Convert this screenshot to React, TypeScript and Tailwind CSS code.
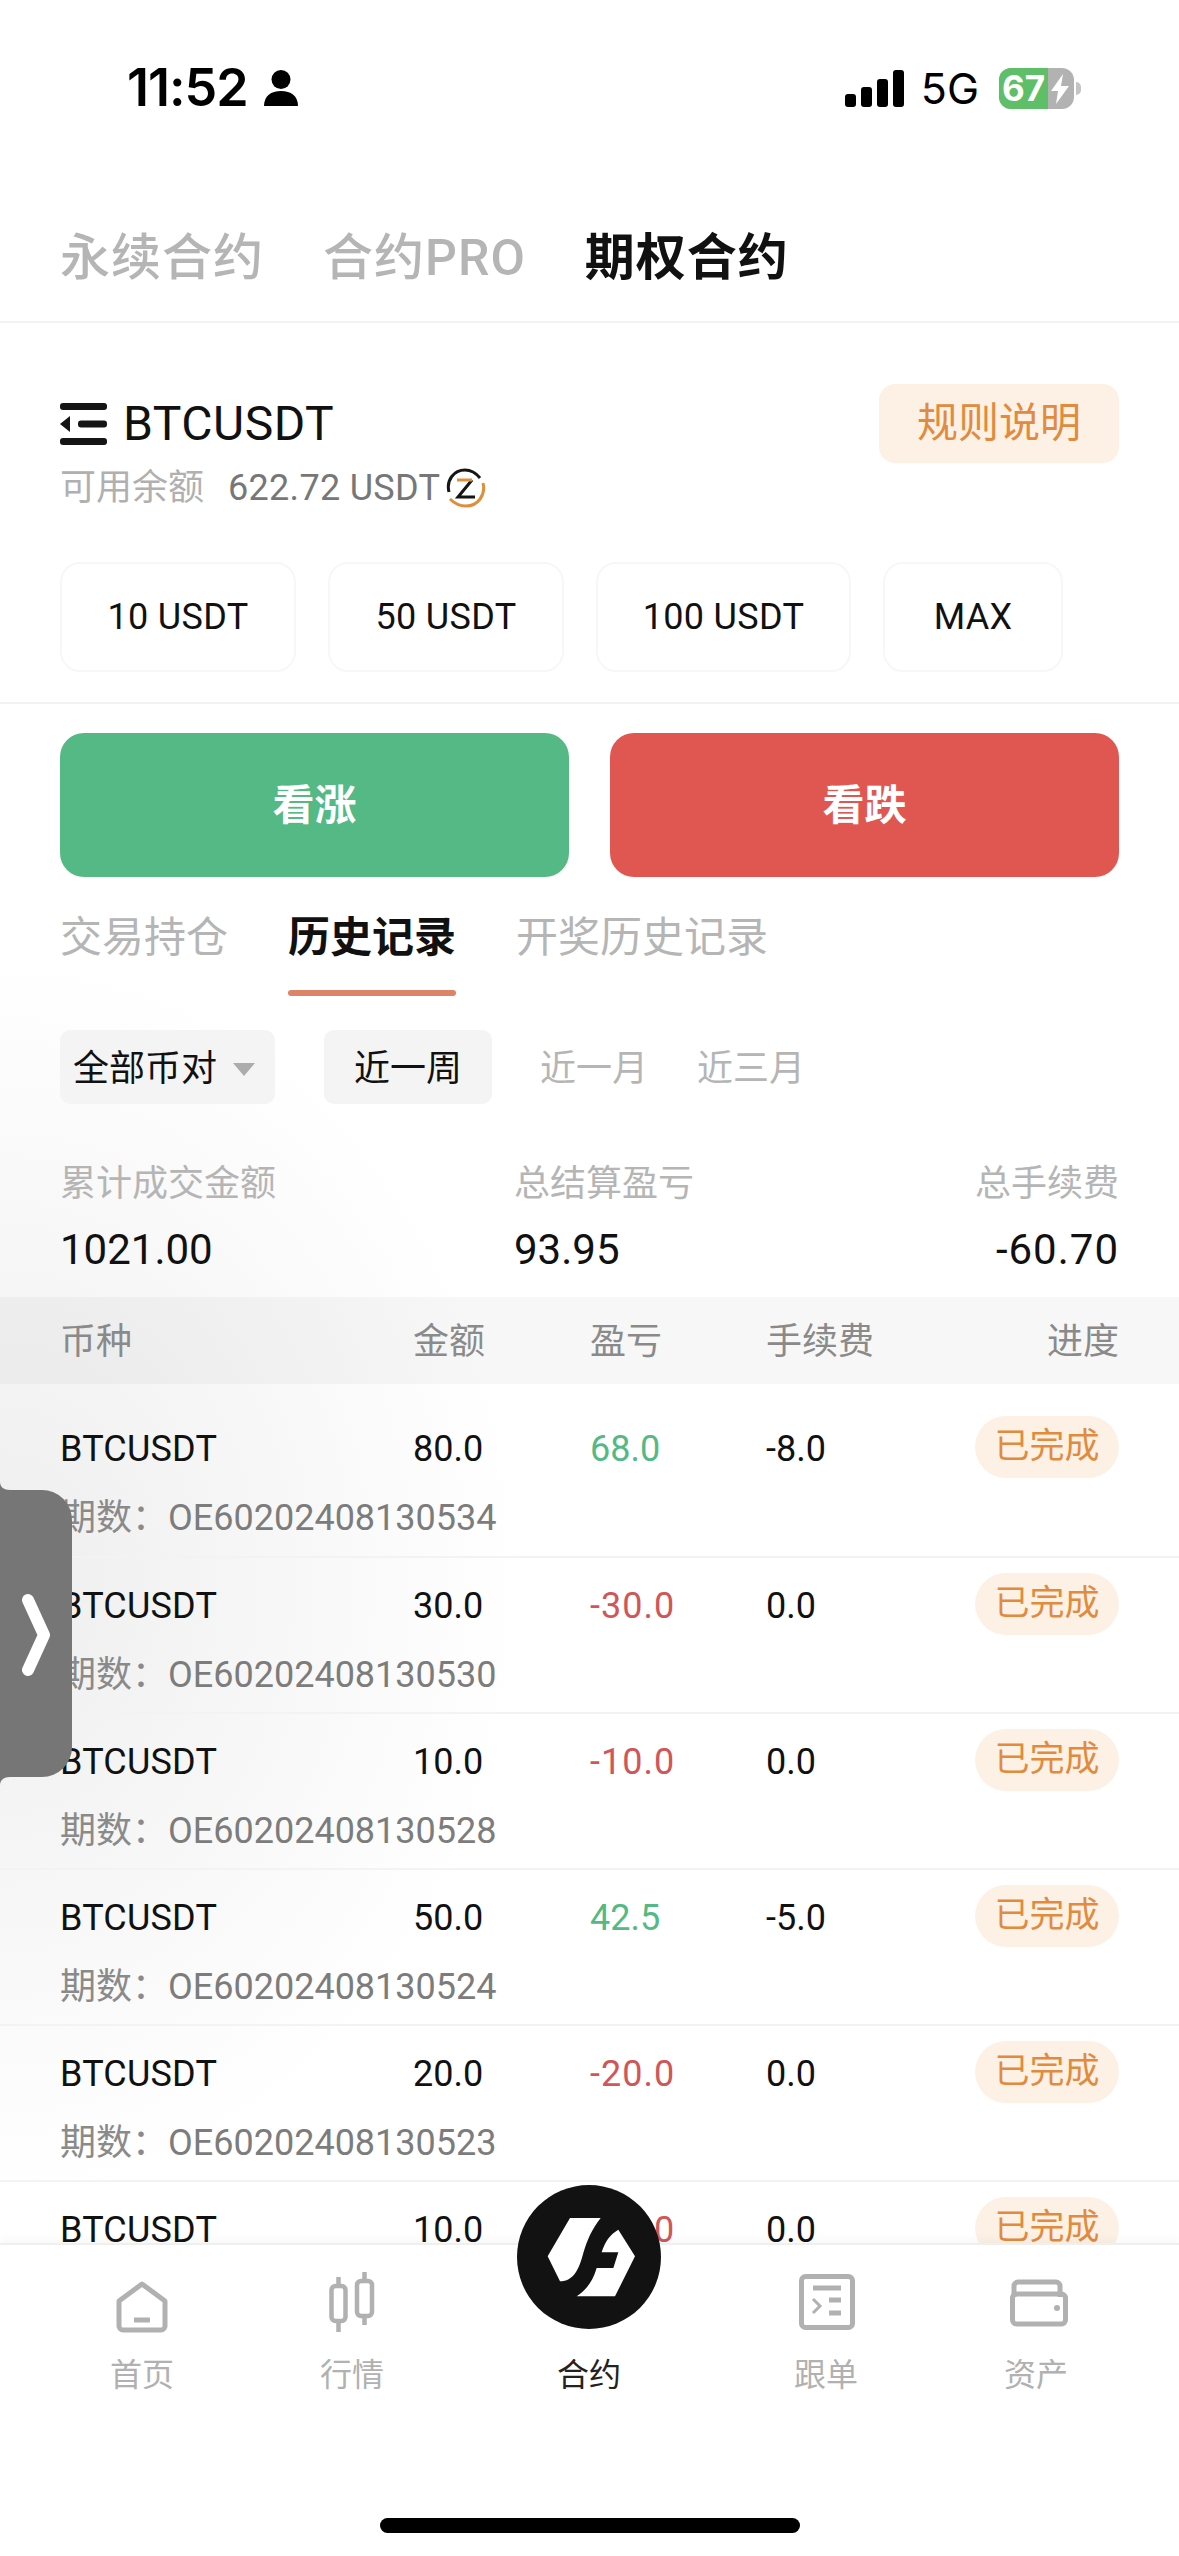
const rows = [
  { amount: '80.0', pnl: '68.0', fee: '-8.0', period: 'OE60202408130534' },
  { amount: '30.0', pnl: '-30.0', fee: '0.0', period: 'OE60202408130530' },
  { amount: '10.0', pnl: '-10.0', fee: '0.0', period: 'OE60202408130528' },
  { amount: '50.0', pnl: '42.5', fee: '-5.0', period: 'OE60202408130524' },
  { amount: '20.0', pnl: '-20.0', fee: '0.0', period: 'OE60202408130523' },
  { amount: '10.0', pnl: '-10.0', fee: '0.0', period: 'OE60202408130522' },
];

function StatusBar() {
  return (
    <div className="h-[130px] pl-[127px] pr-[98px] pt-[64px] flex items-start justify-between font-['Inter',sans-serif]">
      <div className="flex items-center h-[48px] gap-[16px]">
        <span className="text-[52px] leading-none font-semibold tracking-[-1px] text-black">11:52</span>
        <svg width="34" height="36" viewBox="0 0 34 36" fill="#000">
          <circle cx="17" cy="9.5" r="9.5" />
          <path d="M0 36c0-10 7-15 17-15s17 5 17 15z" />
        </svg>
      </div>
      <div className="flex items-center h-[48px]">
        <div className="flex items-end gap-[5px] h-[37px]">
          <div className="w-[11px] h-[13px] rounded-[3px] bg-black" />
          <div className="w-[11px] h-[20px] rounded-[3px] bg-black" />
          <div className="w-[11px] h-[28px] rounded-[3px] bg-black" />
          <div className="w-[11px] h-[37px] rounded-[3px] bg-black" />
        </div>
        <span className="ml-[17px] text-[43px] leading-none text-black">5G</span>
        <div className="ml-[20px] relative w-[75px] h-[41px] rounded-[12px] overflow-hidden bg-[#b2b2b2] flex">
          <div className="w-[49px] bg-[#5fbf68] flex items-center justify-center text-white text-[35px] font-bold leading-none">
            67
          </div>
          <svg className="ml-[2px] mt-[6px]" width="20" height="30" viewBox="0 0 20 30" fill="#fff">
            <path d="M13 0 1 17h7l-2 13L19 12h-8z" />
          </svg>
        </div>
        <div className="ml-[2px] w-[5px] h-[13px] rounded-r-full bg-[#c4c4c4]" />
      </div>
    </div>
  );
}

function MenuIcon() {
  return (
    <svg width="47" height="42" viewBox="0 0 47 42" fill="#151515">
      <rect x="0" y="0" width="47" height="7" rx="3" />
      <rect x="0" y="35" width="47" height="7" rx="3" />
      <rect x="18" y="17.5" width="29" height="7" rx="3" />
      <path d="M10 13v16L0 21z" />
    </svg>
  );
}

function CoinIcon() {
  return (
    <svg width="40" height="40" viewBox="0 0 40 40" fill="none" strokeWidth="3">
      <path d="M3 24C0 12 8 2 19 2c6 0 11 3 15 8" stroke="#151515" />
      <path d="M37 15c3 12-5 23-17 23-7 0-12-3-16-7" stroke="#dd8f3a" />
      <path d="M26 12 12 29h17" stroke="#151515" />
      <path d="M11 12h15" stroke="#dd8f3a" />
    </svg>
  );
}

function Logo() {
  return (
    <svg width="144" height="144" viewBox="111 41 432 432">
      <circle cx="327" cy="257" r="216" fill="#121212" />
      <path
        d="M270 140H362C335 175 322 205 310 245C297 295 280 330 240 330L203 255z"
        fill="#fff"
      />
      <path
        d="M415 175L465 255L405 375H290C320 355 338 330 350 290H400L415 243H365C375 210 390 190 415 175z"
        fill="#fff"
      />
    </svg>
  );
}

function HomeIcon() {
  return (
    <svg width="54" height="52" viewBox="0 0 54 52" fill="none" stroke="#b1b1b1" strokeWidth="5" strokeLinejoin="round">
      <path d="M27 3 50 20v25a4 4 0 0 1-4 4H8a4 4 0 0 1-4-4V20z" />
      <path d="M19 39h16" strokeWidth="5" />
    </svg>
  );
}

function CandleIcon() {
  return (
    <svg width="46" height="62" viewBox="0 0 46 62" fill="none" stroke="#b1b1b1" strokeWidth="4.5">
      <rect x="2.5" y="15" width="14" height="35" rx="4" />
      <rect x="28" y="10" width="15" height="35" rx="4" />
      <path d="M9.500 6v9M9.500 50v11M35.500 1v9M35.500 45v9" />
    </svg>
  );
}

function DocIcon() {
  return (
    <svg className="mb-[3px] ml-[2px]" width="56" height="56" viewBox="0 0 56 56" fill="none" stroke="#b1b1b1" strokeWidth="5">
      <rect x="2.500" y="2.500" width="51" height="51" rx="4" />
      <path d="M14 14h28" />
      <path d="M14 25l7 7-7 7" strokeWidth="3" />
      <path d="M30 26h12M30 39h12" />
    </svg>
  );
}

function WalletIcon() {
  return (
    <svg className="mb-[6px] ml-[6px]" width="58" height="48" viewBox="0 0 58 48" fill="none" stroke="#b1b1b1" strokeWidth="5">
      <path d="M4 18V7a4 4 0 0 1 4-4h38a4 4 0 0 1 4 4v11" />
      <rect x="2.500" y="15" width="53" height="30" rx="4" />
      <circle cx="47" cy="29" r="3" fill="#b1b1b1" stroke="none" />
    </svg>
  );
}

function NavItem({
  icon,
  label,
  width,
  color,
}: {
  icon: React.ReactNode;
  label: string;
  width: string;
  color: string;
}) {
  return (
    <div className={`${width} flex flex-col items-center`}>
      <div className="h-[88px] flex items-end justify-center">{icon}</div>
      <span className={`mt-[22px] text-[32px] leading-[40px] ${color}`}>{label}</span>
    </div>
  );
}

export default function App() {
  return (
    <div className="relative w-[1179px] h-[2556px] overflow-hidden bg-white flex flex-col font-['Roboto','Noto_Sans_CJK_SC',sans-serif]">
      <StatusBar />

      {/* contract tabs */}
      <div className="h-[193px] pl-[60px] pt-[97px] flex gap-[59px] border-b-2 border-[#f2f2f2] text-[50px] leading-[62px] tracking-[1px]">
        <span className="text-[#b5b5b5] font-medium">永续合约</span>
        <span className="text-[#b5b5b5] font-medium">合约PRO</span>
        <span className="text-[#111] font-bold">期权合约</span>
      </div>

      {/* symbol */}
      <div className="px-[60px] pt-[61px] flex justify-between items-start">
        <div>
          <div className="flex items-center gap-[16px] h-[80px]">
            <MenuIcon />
            <span className="text-[48px] leading-none tracking-[0.5px] text-[#111]">BTCUSDT</span>
          </div>
          <div className="mt-[4px] flex items-center h-[40px] text-[36px] leading-none">
            <span className="text-[#b0b0b0]">可用余额</span>
            <span className="ml-[24px] text-[#777] tracking-[0.3px]">622.72 USDT</span>
            <span className="ml-[6px]"><CoinIcon /></span>
          </div>
        </div>
        <div className="w-[240px] h-[79px] rounded-[16px] bg-[#fdf1e6] flex items-center justify-center text-[41px] text-[#e08b3e]">
          规则说明
        </div>
      </div>

      {/* amounts */}
      <div className="mt-[54px] px-[60px] pb-[30px] flex gap-[32px] border-b-2 border-[#f2f2f2]">
        {[
          ['10 USDT', 'w-[236px]'],
          ['50 USDT', 'w-[236px]'],
          ['100 USDT', 'w-[255px]'],
          ['MAX', 'w-[180px]'],
        ].map(([text, width]) => (
          <div
            key={text}
            className={`${width} h-[110px] rounded-[20px] border-2 border-[#f7f7f7] flex items-center justify-center text-[36px] tracking-[0.3px] text-[#111]`}
          >
            {text}
          </div>
        ))}
      </div>

      {/* long short */}
      <div className="mt-[29px] px-[60px] flex gap-[41px] text-[42px] font-bold text-white">
        <div className="w-[509px] h-[144px] rounded-[24px] bg-[#55b985] flex items-center justify-center">看涨</div>
        <div className="w-[509px] h-[144px] rounded-[24px] bg-[#e05751] flex items-center justify-center">看跌</div>
      </div>

      {/* main area with faint haze on the left */}
      <div className="relative flex-1 min-h-0 overflow-hidden">
        <div className="absolute inset-0 bg-[radial-gradient(ellipse_520px_620px_at_0px_700px,#eeeeee,#ffffff00)]" />
        <div className="relative">
          <div className="pl-[60px] pt-[31px] flex gap-[60px] text-[42px] leading-[60px]">
            <span className="text-[#b5b5b5]">交易持仓</span>
            <div className="relative h-[88px]">
              <span className="font-bold text-[#111]">历史记录</span>
              <div className="absolute left-0 right-0 bottom-0 h-[6px] rounded-full bg-[#dd8468]" />
            </div>
            <span className="text-[#b5b5b5]">开奖历史记录</span>
          </div>

          <div className="mt-[34px] pl-[60px] flex items-center text-[36px]">
            <div className="w-[215px] h-[74px] rounded-[10px] bg-[#f4f4f5] pl-[13px] pt-[3px] flex items-center text-[#111]">
              全部币对
              <span className="ml-[16px] mt-[2px] border-x-[11px] border-x-transparent border-t-[13px] border-t-[#acacac]" />
            </div>
            <div className="ml-[49px] w-[168px] h-[74px] rounded-[10px] bg-[#f4f4f5] pt-[3px] flex items-center justify-center text-[#111]">
              近一周
            </div>
            <span className="ml-[48px] pt-[3px] text-[#b5b5b5]">近一月</span>
            <span className="ml-[49px] pt-[3px] text-[#b5b5b5]">近三月</span>
          </div>

          <div className="mt-[57px] px-[60px] flex justify-between">
            <div className="w-[454px]">
              <div className="text-[36px] leading-[46px] text-[#b5b5b5]">累计成交金额</div>
              <div className="mt-[18px] text-[42px] leading-[50px] text-[#111]">1021.00</div>
            </div>
            <div className="flex-1">
              <div className="text-[36px] leading-[46px] text-[#b5b5b5]">总结算盈亏</div>
              <div className="mt-[18px] text-[42px] leading-[50px] text-[#111]">93.95</div>
            </div>
            <div className="text-right">
              <div className="text-[36px] leading-[46px] text-[#b5b5b5]">总手续费</div>
              <div className="mt-[18px] text-[42px] leading-[50px] tracking-[1px] text-[#111]">-60.70</div>
            </div>
          </div>

          <div className="mt-[22px] h-[87px] px-[60px] pt-[2px] bg-[#00000008] grid grid-cols-[353px_177px_176px_1fr_auto] items-center text-[36px] text-[#8a8a8a]">
            <span>币种</span>
            <span>金额</span>
            <span>盈亏</span>
            <span>手续费</span>
            <span>进度</span>
          </div>

          {rows.map((row, i) => (
            <div
              key={row.period}
              className={
                i === 0
                  ? 'h-[172px] px-[60px] pt-[32px]'
                  : 'h-[156px] px-[60px] pt-[15px] border-t-2 border-[#f3f3f3]'
              }
            >
              <div className="h-[62px] grid grid-cols-[353px_177px_176px_1fr_auto] items-center text-[36px] text-[#111]">
                <span className="pt-[4px] tracking-[0.2px]">BTCUSDT</span>
                <span className="pt-[4px]">{row.amount}</span>
                <span
                  className={
                    row.pnl.startsWith('-')
                      ? 'pt-[4px] tracking-[1px] text-[#d0565a]'
                      : 'pt-[4px] text-[#55b985]'
                  }
                >
                  {row.pnl}
                </span>
                <span className="pt-[4px]">{row.fee}</span>
                <span className="w-[144px] h-[62px] rounded-full bg-[#fdf1e6] flex items-center justify-center text-[35px] text-[#e08b3e]">
                  已完成
                </span>
              </div>
              <div className="mt-[13px] text-[36px] leading-[54px] whitespace-nowrap">
                <span className="text-[#8a8a8a]">期数：</span>
                <span className="text-[#7c7c7c]">{row.period}</span>
              </div>
            </div>
          ))}
        </div>

        {/* side drawer handle */}
        <div className="absolute left-0 top-[613px] w-[72px] h-[287px] rounded-r-[30px] bg-[#767676] flex items-center">
          <svg className="ml-[22px] mt-[2px]" width="28" height="82" viewBox="0 0 28 82" fill="none" stroke="#fff" strokeWidth="12" strokeLinecap="round" strokeLinejoin="round">
            <path d="M6 6 22 41 6 76" />
          </svg>
          <svg className="absolute left-0 top-[-8px]" width="10" height="8" viewBox="0 0 10 8" fill="#767676">
            <path d="M0 0c0 5 4 8 10 8H0z" />
          </svg>
          <svg className="absolute left-0 bottom-[-8px]" width="10" height="8" viewBox="0 0 10 8" fill="#767676">
            <path d="M0 8c0-5 4-8 10-8H0z" />
          </svg>
        </div>
      </div>

      {/* bottom nav */}
      <div className="relative z-10 h-[313px] shrink-0 bg-white border-t-2 border-[#efefef] shadow-[0_-4px_8px_#00000008]">
        <div className="flex pl-[37px]">
          <NavItem icon={<HomeIcon />} label="首页" width="w-[210px]" color="text-[#b1b1b1]" />
          <NavItem icon={<CandleIcon />} label="行情" width="w-[210px]" color="text-[#b1b1b1]" />
          <NavItem
            icon={<div className="w-[144px] h-[1px]" />}
            label="合约"
            width="w-[264px]"
            color="text-[#222]"
          />
          <NavItem icon={<DocIcon />} label="跟单" width="w-[210px]" color="text-[#b1b1b1]" />
          <NavItem icon={<WalletIcon />} label="资产" width="w-[210px]" color="text-[#b1b1b1]" />
        </div>
        <div className="absolute left-[517px] top-[-60px]">
          <Logo />
        </div>
        <div className="absolute left-[380px] top-[273px] w-[420px] h-[15px] rounded-full bg-black" />
      </div>
    </div>
  );
}
